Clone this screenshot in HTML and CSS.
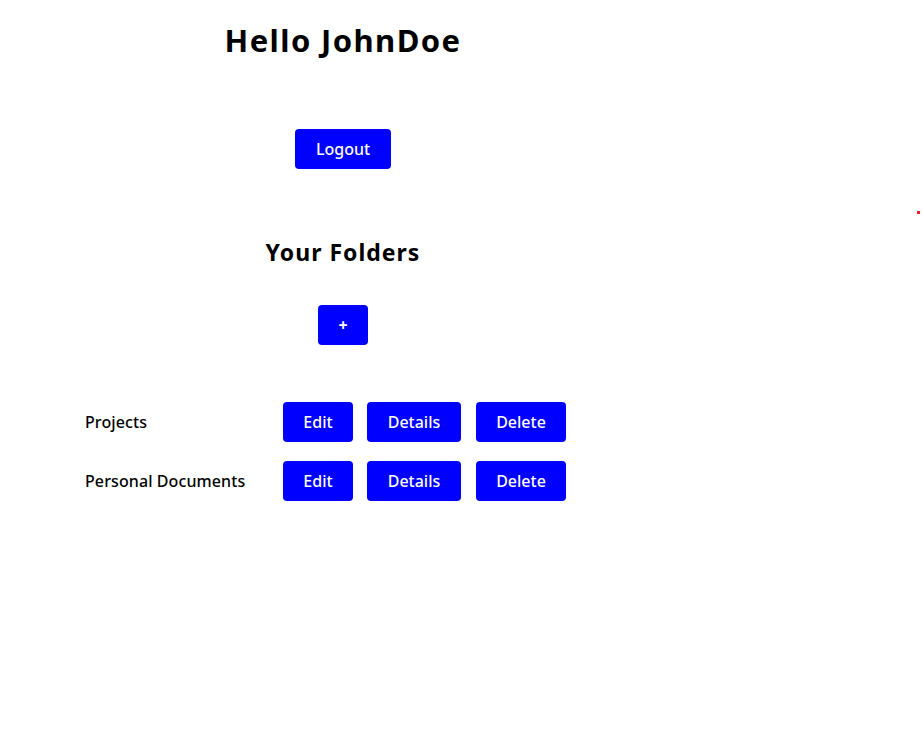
FILE: index.html
```html
<!DOCTYPE html>
<html>
<head>
<meta charset="utf-8">
<link rel="stylesheet" href="styles.css">
</head>
<body>
<div class="main">
  <h1 class="title">Hello JohnDoe</h1>
  <button class="btn btn-logout">Logout</button>
  <h2 class="subtitle">Your Folders</h2>
  <button class="btn btn-add">+</button>
  <ul class="folders">
    <li class="folder">
      <span class="folder-name">Projects</span>
      <button class="btn btn-edit">Edit</button>
      <button class="btn btn-details">Details</button>
      <button class="btn btn-delete">Delete</button>
    </li>
    <li class="folder">
      <span class="folder-name">Personal Documents</span>
      <button class="btn btn-edit">Edit</button>
      <button class="btn btn-details">Details</button>
      <button class="btn btn-delete">Delete</button>
    </li>
  </ul>
</div>
<div class="dot"></div>
</body>
</html>
```
FILE: styles.css
```css
html, body {
  margin: 0;
  padding: 0;
  background: #fff;
}
body {
  font-family: "Noto Sans", "Open Sans", sans-serif;
  color: #000;
  width: 922px;
  height: 753px;
  position: relative;
  overflow: hidden;
}
.main {
  width: 686px;
  padding-top: 20px;
  display: flex;
  flex-direction: column;
  align-items: center;
}
.title {
  margin: 0;
  font-size: 31px;
  line-height: 40px;
  font-weight: 700;
  letter-spacing: 1.4px;
}
.btn {
  background: #0000ff;
  color: #fff;
  border: none;
  border-radius: 4px;
  height: 40px;
  font-family: "Noto Sans", "Open Sans", sans-serif;
  font-size: 16px;
  font-weight: 500;
  padding: 0;
  cursor: pointer;
}
.btn-logout {
  margin-top: 69px;
  width: 96px;
}
.subtitle {
  margin: 67px 0 0;
  font-size: 23px;
  line-height: 32px;
  font-weight: 700;
  letter-spacing: 1px;
}
.btn-add {
  margin-top: 37px;
  width: 50px;
  font-size: 16px;
  font-weight: 700;
}
.folders {
  list-style: none;
  margin: 57px 0 0;
  padding: 0 0 0 85px;
  align-self: stretch;
  display: flex;
  flex-direction: column;
  gap: 19px;
}
.folder {
  display: flex;
  align-items: center;
}
.folder-name {
  width: 198px;
  font-size: 16px;
  font-weight: 500;
  letter-spacing: 0.1px;
}
.btn-edit { width: 70px; }
.btn-details { width: 94px; margin-left: 14px; }
.btn-delete { width: 90px; margin-left: 15px; }
.dot {
  position: absolute;
  left: 917px;
  top: 211px;
  width: 3px;
  height: 3px;
  background: #f0202a;
}
```
